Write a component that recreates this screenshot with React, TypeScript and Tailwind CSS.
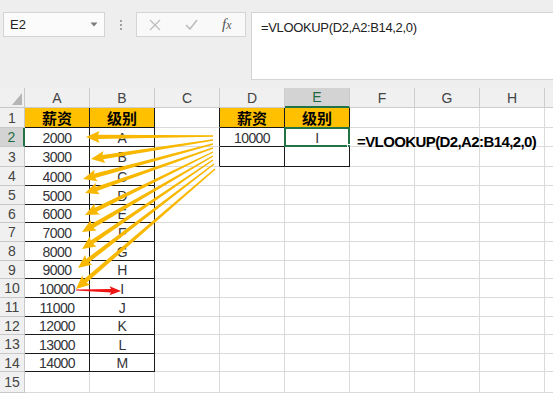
import React from 'react';

type P = [number, number];

function arrowPoints(t: P, p: P, tw: number, bw: number, hl: number, hw: number) {
  const dx = p[0] - t[0];
  const dy = p[1] - t[1];
  const len = Math.hypot(dx, dy);
  const ux = dx / len;
  const uy = dy / len;
  const nx = -uy;
  const ny = ux;
  const bx = p[0] - ux * hl;
  const by = p[1] - uy * hl;
  const pts: P[] = [
    [t[0] + nx * tw, t[1] + ny * tw],
    [bx + nx * bw, by + ny * bw],
    [bx + nx * hw - ux * 1.5, by + ny * hw - uy * 1.5],
    p,
    [bx - nx * hw - ux * 1.5, by - ny * hw - uy * 1.5],
    [bx - nx * bw, by - ny * bw],
    [t[0] - nx * tw, t[1] - ny * tw],
  ];
  return pts.map((q) => q.map((v) => v.toFixed(1)).join(',')).join(' ');
}

const yellowArrows: { t: P; p: P }[] = [
  { t: [213, 136], p: [86, 137] },
  { t: [213, 140], p: [91, 159] },
  { t: [213, 144], p: [83, 179] },
  { t: [213, 148], p: [85, 193] },
  { t: [213, 152], p: [85, 215] },
  { t: [213, 156], p: [82, 232] },
  { t: [213, 160], p: [82, 249] },
  { t: [214, 164], p: [78, 268] },
  { t: [215, 169], p: [76, 289] },
];

const colLetters = ['A', 'B', 'C', 'D', 'E', 'F', 'G', 'H'];
const grid = 'border-[#dadada]';

function cellValue(r: number, c: number): { text: string; cjk?: boolean } | null {
  if (c === 1) {
    if (r === 1) return { text: '薪资', cjk: true };
    if (r >= 2 && r <= 14) return { text: String(r * 1000) };
  }
  if (c === 2) {
    if (r === 1) return { text: '级别', cjk: true };
    if (r >= 2 && r <= 14) return { text: String.fromCharCode(63 + r) };
  }
  if (c === 4) {
    if (r === 1) return { text: '薪资', cjk: true };
    if (r === 2) return { text: '10000' };
  }
  if (c === 5) {
    if (r === 1) return { text: '级别', cjk: true };
    if (r === 2) return { text: 'I' };
  }
  return null;
}

function rightBlack(r: number, c: number) {
  if ((c === 1 || c === 2) && r >= 1 && r <= 14) return true;
  if ((c === 3 || c === 4 || c === 5) && r >= 1 && r <= 3) return true;
  return false;
}
function bottomBlack(r: number, c: number) {
  if ((c === 1 || c === 2) && r >= 1 && r <= 14) return true;
  if ((c === 4 || c === 5) && r >= 1 && r <= 3) return true;
  return false;
}

function Cell({ r, c }: { r: number; c: number }) {
  const v = cellValue(r, c);
  const isFill = r === 1 && (c === 1 || c === 2 || c === 4 || c === 5);
  const rb = rightBlack(r, c) ? 'border-r-[#1a1a1a]' : 'border-r-[#dadada]';
  const bb = bottomBlack(r, c) ? 'border-b-[#1a1a1a]' : 'border-b-[#dadada]';
  return (
    <div
      className={`relative flex items-center justify-center border-r border-b ${rb} ${bb} ${
        isFill ? 'bg-[#ffc000]' : 'bg-white'
      }`}
    >
      {v &&
        (v.cjk ? (
          <span className="text-[15px] font-bold text-black leading-none" style={{ fontFamily: '"Noto Sans CJK SC", sans-serif' }}>
            {v.text}
          </span>
        ) : (
          <span
            className="text-[14px] tracking-[-0.55px] text-[#333338] leading-none pt-[1px]"
            style={{ fontFamily: '"Liberation Sans", Arial, sans-serif' }}
          >
            {v.text}
          </span>
        ))}
      {r === 2 && c === 5 && (
        <div className="absolute left-[-1px] top-[-1px] right-[-1px] bottom-[-1px] border-2 border-[#217346]">
          <div className="absolute right-[-5px] bottom-[-5px] w-[6px] h-[6px] bg-[#217346] border border-white" />
        </div>
      )}
    </div>
  );
}

export default function App() {
  const rows = Array.from({ length: 15 }, (_, i) => i + 1);
  return (
    <div
      className="relative w-[553px] h-[393px] overflow-hidden bg-white"
      style={{ fontFamily: '"Liberation Sans", Arial, sans-serif' }}
    >
      {/* Toolbar */}
      <div className="h-[88px] bg-[#eeeeee] flex items-start pt-[12px]">
        <div className="ml-[3px] w-[102px] h-[25px] bg-[#fbfbfb] border border-[#d4d4d4] flex items-center justify-between pl-[6px] pr-[6px]">
          <span className="text-[13px] text-[#222] pt-[1px]">E2</span>
          <svg width="8" height="5" viewBox="0 0 8 5">
            <path d="M0.5 0.5 L7.5 0.5 L4 4.5 Z" fill="#7a7a7a" />
          </svg>
        </div>
        <div className="w-[31px] h-[25px] flex flex-col items-center justify-center gap-[2px] pl-[1px]">
          <div className="w-[2px] h-[2px] bg-[#a0a0a0]" />
          <div className="w-[2px] h-[2px] bg-[#a0a0a0]" />
          <div className="w-[2px] h-[2px] bg-[#a0a0a0]" />
        </div>
        <div className="w-[110px] h-[25px] bg-[#f9f9f9] border border-[#d4d4d4] flex items-center">
          <svg className="ml-[12px]" width="12" height="12" viewBox="0 0 12 12">
            <path d="M1 1 L11 11 M11 1 L1 11" stroke="#bdbdbd" strokeWidth="1.3" />
          </svg>
          <svg className="ml-[24px]" width="13" height="11" viewBox="0 0 13 11">
            <path d="M1 6 L5 10 L12 1" stroke="#bdbdbd" strokeWidth="1.6" fill="none" />
          </svg>
          <span
            className="ml-[24px] text-[15px] italic text-[#555] leading-none"
            style={{ fontFamily: '"Liberation Serif", "Times New Roman", serif' }}
          >
            <i>f</i>
            <span className="text-[12px]">x</span>
          </span>
        </div>
        <div className="ml-[5px] flex-1 h-[68px] bg-white border border-r-0 border-[#d4d4d4] pl-[9px] pt-[2px]">
          <span className="text-[13px] text-[#222] tracking-[-0.35px]">=VLOOKUP(D2,A2:B14,2,0)</span>
        </div>
      </div>

      {/* Grid */}
      <div className="grid grid-cols-[25px_repeat(8,65px)_1fr] grid-rows-[20px_20px_19px_20px_19px_19px_18px_19px_19px_18px_19px_19px_18px_19px_18px_21px]">
        <div className="relative bg-[#f0f0f0] border-r border-b border-[#c8c8c8]">
          <svg className="absolute right-[2px] bottom-[2px]" width="10" height="12" viewBox="0 0 10 12">
            <path d="M10 0 L10 12 L0 12 Z" fill="#b5b5b5" />
          </svg>
        </div>
        {colLetters.map((l) =>
          l === 'E' ? (
            <div key={l} className="flex items-center justify-center bg-[#d3d3d3] border-r border-r-[#c8c8c8] border-b-2 border-b-[#217346]">
              <span className="text-[14px] text-[#1e6b41] leading-none">{l}</span>
            </div>
          ) : (
            <div key={l} className="flex items-center justify-center bg-[#f0f0f0] border-r border-b border-[#cdcdcd]">
              <span className="text-[14px] text-[#444] leading-none">{l}</span>
            </div>
          )
        )}
        <div className="bg-[#f0f0f0] border-b border-[#cdcdcd]" />

        {rows.map((r) => (
          <React.Fragment key={r}>
            {r === 2 ? (
              <div className="flex items-center justify-center bg-[#d3d3d3] border-r-2 border-r-[#217346] border-b border-b-[#c8c8c8]">
                <span className="text-[14px] text-[#1e6b41] leading-none">{r}</span>
              </div>
            ) : (
              <div className="flex items-center justify-center bg-[#f0f0f0] border-r border-b border-[#c8c8c8]">
                <span className="text-[14px] text-[#444] leading-none">{r}</span>
              </div>
            )}
            {colLetters.map((_, ci) => (
              <Cell key={ci} r={r} c={ci + 1} />
            ))}
            <div className={`bg-white border-b ${grid}`} />
          </React.Fragment>
        ))}
      </div>

      {/* Formula annotation */}
      <div className="absolute left-[357px] top-[132px] h-[19px] flex items-center">
        <span className="text-[15px] font-bold text-black tracking-[-0.6px] leading-none">=VLOOKUP(D2,A2:B14,2,0)</span>
      </div>

      {/* Arrows overlay */}
      <svg className="absolute left-0 top-0 pointer-events-none" width="553" height="393" viewBox="0 0 553 393">
        {yellowArrows.map((a, i) => (
          <polygon key={i} points={arrowPoints(a.t, a.p, 0.7, 2.2, 12, 6)} fill="#f8b800" />
        ))}
        <polygon points={arrowPoints([76, 290], [121, 291], 0.5, 1.7, 10, 4.5)} fill="#f01414" />
      </svg>
    </div>
  );
}
